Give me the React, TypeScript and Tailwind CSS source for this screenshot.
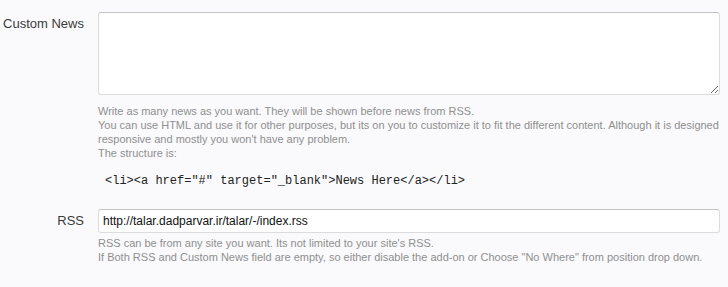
import React from "react";

const labelCls =
  "w-[84px] shrink-0 text-right text-[13px] leading-[16px] text-[#3a3a3a]";
const explainCls = "text-[11px] leading-[14px] text-[#8f8f8f]";

export default function App() {
  return (
    <div
      className="h-[287px] w-[728px] overflow-hidden bg-[#fafafc]"
      style={{ fontFamily: "Tahoma, 'Liberation Sans', sans-serif" }}
    >
      {/* Custom News */}
      <div className="flex gap-[14px] pt-[12px]">
        <div className={`${labelCls} pt-[4px]`}>Custom News</div>
        <div className="w-[622px]">
          <textarea className="block h-[83px] w-[622px] rounded-[3px] border border-[#dcdcdc] border-t-[#c4c4c4] bg-white outline-none" />
          <div className={`${explainCls} mt-[9px]`}>
            Write as many news as you want. They will be shown before news from RSS.
            <br />
            You can use HTML and use it for other purposes, but its on you to customize it to fit the different content. Although it is designed responsive and mostly you won't have any problem.
            <br />
            The structure is:
          </div>
          <pre
            className="mt-[13px] pl-[7px] text-[12px] leading-[16px] text-[#222]"
            style={{ fontFamily: "Consolas, 'Liberation Mono', monospace" }}
          >
            {'<li><a href="#" target="_blank">News Here</a></li>'}
          </pre>
        </div>
      </div>

      {/* RSS */}
      <div className="mt-[20px] flex gap-[14px]">
        <div className={`${labelCls} pt-[4px]`}>RSS</div>
        <div className="w-[622px]">
          <input
            readOnly
            value="http://talar.dadparvar.ir/talar/-/index.rss"
            className="block h-[24px] w-[622px] rounded-[3px] border border-[#dcdcdc] border-t-[#c4c4c4] bg-white px-[4px] text-[12px] text-[#111] outline-none"
          />
          <div className={`${explainCls} mt-[3px]`}>
            RSS can be from any site you want. Its not limited to your site's RSS.
            <br />
            If Both RSS and Custom News field are empty, so either disable the add-on or Choose "No Where" from position drop down.
          </div>
        </div>
      </div>
    </div>
  );
}
